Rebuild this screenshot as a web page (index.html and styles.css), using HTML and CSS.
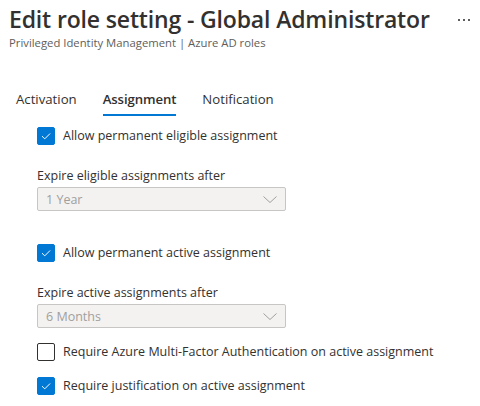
FILE: index.html
```html
<!DOCTYPE html>
<html>
<head>
<meta charset="utf-8">
<link rel="stylesheet" href="styles.css">
</head>
<body>
<div class="page">
  <header class="header">
    <div class="titles">
      <h1 class="title">Edit role setting - Global Administrator</h1>
      <div class="subtitle">Privileged Identity Management | Azure AD roles</div>
    </div>
    <div class="more"><span></span><span></span><span></span></div>
  </header>
  <nav class="tabs">
    <div class="tab">Activation</div>
    <div class="tab active">Assignment</div>
    <div class="tab">Notification</div>
  </nav>
  <div class="form">
    <label class="check">
      <span class="box checked"><svg viewBox="0 0 18 18"><path d="M4.5 9.2 L7.6 12.2 L13.6 6.2" /></svg></span>
      <span class="check-label">Allow permanent eligible assignment</span>
    </label>
    <div class="field">
      <div class="field-label">Expire eligible assignments after</div>
      <div class="dropdown"><span>1 Year</span><svg viewBox="0 0 14 7"><path d="M0.5 0.5 L7 6.5 L13.5 0.5" /></svg></div>
    </div>
    <label class="check">
      <span class="box checked"><svg viewBox="0 0 18 18"><path d="M4.5 9.2 L7.6 12.2 L13.6 6.2" /></svg></span>
      <span class="check-label">Allow permanent active assignment</span>
    </label>
    <div class="field field-tight">
      <div class="field-label">Expire active assignments after</div>
      <div class="dropdown"><span>6 Months</span><svg viewBox="0 0 14 7"><path d="M0.5 0.5 L7 6.5 L13.5 0.5" /></svg></div>
    </div>
    <label class="check">
      <span class="box"></span>
      <span class="check-label">Require Azure Multi-Factor Authentication on active assignment</span>
    </label>
    <label class="check">
      <span class="box checked"><svg viewBox="0 0 18 18"><path d="M4.5 9.2 L7.6 12.2 L13.6 6.2" /></svg></span>
      <span class="check-label">Require justification on active assignment</span>
    </label>
  </div>
</div>
</body>
</html>
```
FILE: styles.css
```css
* { box-sizing: border-box; }
body {
  margin: 0;
  background: #ffffff;
  font-family: "Open Sans", "Noto Sans", sans-serif;
  color: #323130;
}
.page {
  padding: 3px 0 0 9px;
}
.header {
  display: flex;
  align-items: flex-start;
}
.titles { flex: 1; }
.title {
  margin: 0;
  font-size: 23px;
  font-weight: 600;
  line-height: 32px;
  color: #323130;
  letter-spacing: -0.15px;
}
.subtitle {
  font-size: 11.3px;
  line-height: 16px;
  color: #605e5c;
}
.more {
  display: flex;
  gap: 3px;
  padding: 16px 10px 0 0;
}
.more span {
  width: 2px;
  height: 2px;
  background: #605e5c;
}
.tabs {
  display: flex;
  gap: 26px;
  margin: 38px 0 0 7px;
}
.tab {
  font-size: 13.2px;
  line-height: 20px;
  padding-bottom: 5px;
  border-bottom: 2px solid transparent;
  color: #323130;
}
.tab.active {
  font-weight: 600;
  letter-spacing: -0.1px;
  border-bottom-color: #0078d4;
}
.form {
  padding: 10px 0 0 28px;
  display: flex;
  flex-direction: column;
}
.check {
  display: flex;
  align-items: center;
  gap: 8px;
  height: 20px;
}
.box {
  width: 18px;
  height: 18px;
  border: 1px solid #323130;
  border-radius: 2px;
  display: flex;
  flex: none;
}
.box.checked {
  background: #0078d4;
  border-color: #0078d4;
}
.box svg {
  width: 16px;
  height: 16px;
  fill: none;
  stroke: #ffffff;
  stroke-width: 1.1;
}
.check-label {
  font-size: 12.5px;
  line-height: 20px;
  color: #323130;
}
.field {
  margin-top: 20px;
  margin-bottom: 32px;
}
.field-tight {
  margin-bottom: 14px;
}
.field-label {
  font-size: 12.5px;
  line-height: 20px;
  margin-bottom: 1px;
}
.dropdown {
  width: 249px;
  height: 24px;
  background: #f3f2f1;
  border: 1px solid #c8c6c4;
  border-radius: 2px;
  display: flex;
  align-items: center;
  justify-content: space-between;
  padding: 0 8px 0 8px;
  font-size: 12.5px;
  color: #a19f9d;
}
.dropdown svg {
  width: 14px;
  height: 7px;
  fill: none;
  stroke: #a19f9d;
  stroke-width: 1;
}
.check + .check { margin-top: 14px; }
```
